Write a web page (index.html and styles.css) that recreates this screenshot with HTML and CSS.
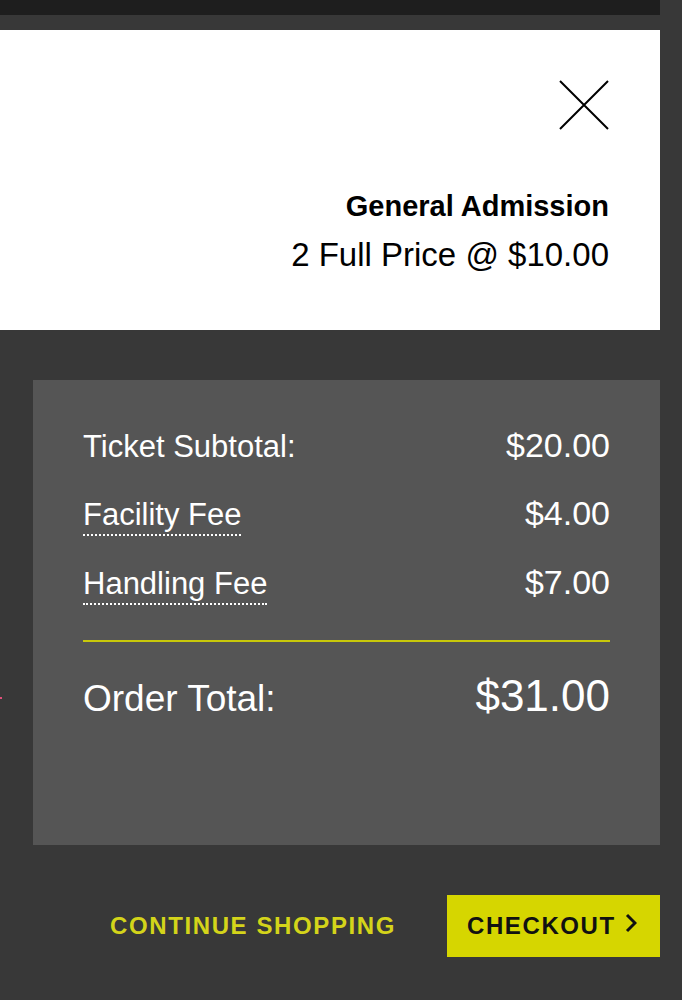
FILE: index.html
```html
<!DOCTYPE html>
<html lang="en">
<head>
  <meta charset="UTF-8" />
  <title>Cart</title>
  <meta name="viewport" content="width=device-width, initial-scale=1.0" />
  <link rel="stylesheet" href="styles.css">
</head>
<body>
  <div class="page">
    <div class="topbar"></div>

    <section class="cart-item">
      <button class="close" aria-label="Remove">
        <svg width="50" height="50" viewBox="0 0 50 50">
          <path d="M1 1 L49 49 M49 1 L1 49" stroke="#000" stroke-width="2" fill="none" />
        </svg>
      </button>
      <div class="item-info">
        <div class="item-name">General Admission</div>
        <div class="item-qty">2 Full Price @ $10.00</div>
      </div>
    </section>

    <section class="summary">
      <div class="row">
        <span class="label">Ticket Subtotal:</span>
        <span class="amount">$20.00</span>
      </div>
      <div class="row">
        <span class="label tip">Facility Fee</span>
        <span class="amount">$4.00</span>
      </div>
      <div class="row">
        <span class="label tip">Handling Fee</span>
        <span class="amount">$7.00</span>
      </div>
      <div class="row total">
        <span class="label">Order Total:</span>
        <span class="amount">$31.00</span>
      </div>
    </section>

    <div class="actions">
      <a href="#" class="continue">CONTINUE SHOPPING</a>
      <a href="#" class="checkout">
        CHECKOUT
        <svg width="12" height="20" viewBox="0 0 12 20">
          <path d="M2 2 L10 10 L2 18" stroke="#111" stroke-width="3" fill="none" />
        </svg>
      </a>
    </div>

    <span class="edge-mark"></span>
  </div>
</body>
</html>
```

FILE: styles.css
```css
body {
  background-color: #383838;
  color: #fff;
  font-family: 'Liberation Sans', Arial, sans-serif;
  margin: 0;
}
.page {
  width: 660px;
  position: relative;
}
.topbar {
  height: 15px;
  background-color: #1e1e1e;
  margin-bottom: 15px;
}
.cart-item {
  background-color: #fff;
  color: #000;
  height: 300px;
  box-sizing: border-box;
  padding: 50px 51px 0 0;
  display: flex;
  flex-direction: column;
  align-items: flex-end;
}
.close {
  background: none;
  border: none;
  padding: 0;
  width: 50px;
  height: 50px;
  cursor: pointer;
}
.close svg {
  display: block;
}
.item-info {
  text-align: right;
  margin-top: 57px;
}
.item-name {
  font-weight: bold;
  font-size: 29px;
  line-height: 38px;
}
.item-qty {
  font-size: 33px;
  line-height: 50px;
  margin-top: 5px;
}
.summary {
  background-color: #555;
  margin: 50px 0 0 33px;
  height: 465px;
  box-sizing: border-box;
  padding: 45px 50px 0 50px;
}
.row {
  display: flex;
  justify-content: space-between;
  align-items: baseline;
  line-height: 40px;
  margin-bottom: 26px;
}
.label {
  font-size: 31px;
}
.amount {
  font-size: 34px;
}
.tip {
  line-height: 34px;
  padding-bottom: 2px;
  border-bottom: 2px dotted #fff;
}
.row.total {
  border-top: 2px solid #c8c80a;
  margin-top: 35px;
  padding-top: 29px;
  line-height: 50px;
}
.total .label {
  font-size: 37px;
}
.total .amount {
  font-size: 44px;
}
.actions {
  display: flex;
  justify-content: flex-end;
  align-items: center;
  gap: 51px;
  margin-top: 50px;
}
.continue {
  color: #d4d41a;
  font-weight: bold;
  font-size: 24px;
  letter-spacing: 1.6px;
  text-decoration: none;
}
.checkout {
  display: flex;
  align-items: center;
  gap: 9px;
  width: 213px;
  height: 62px;
  box-sizing: border-box;
  padding-left: 20px;
  background-color: #d6d600;
  color: #111;
  font-weight: bold;
  font-size: 24px;
  letter-spacing: 1.6px;
  text-decoration: none;
}
.checkout svg {
  margin-top: -6px;
}
.edge-mark {
  position: absolute;
  left: 0;
  top: 697px;
  width: 2px;
  height: 2px;
  background-color: #e0507a;
}
```
